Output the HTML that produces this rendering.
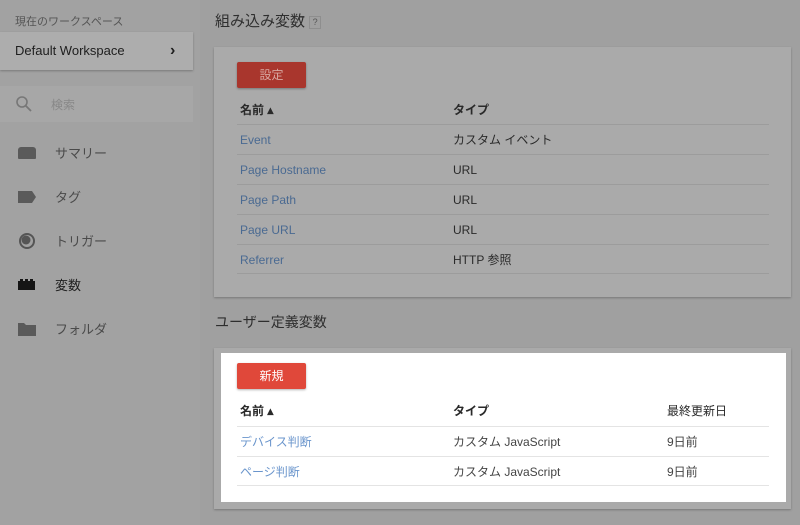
<!DOCTYPE html>
<html><head><meta charset="utf-8"><style>
*{box-sizing:border-box;margin:0;padding:0}
body{width:800px;height:525px;background:#a0a0a0;font-family:"Liberation Sans","Noto Sans CJK JP",sans-serif;position:relative;overflow:hidden;color:#2a2a2a}
.side{position:absolute;left:0;top:0;width:200px;height:525px;background:#a2a2a2}
.abs{position:absolute}
.ws{left:0;top:32px;width:193px;height:38px;background:#adadad;box-shadow:0 1px 2px rgba(0,0,0,.25);font-size:13px;line-height:38px;padding-left:15px;color:#1e1e1e}
.search{left:0;top:86px;width:193px;height:36px;background:#a7a7a7}
.nav{left:0;width:193px;font-size:13px;color:#4a4a4a}
.card{position:absolute;left:214px;width:577px;background:#aaaaaa;box-shadow:0 1px 2px rgba(0,0,0,.25)}
.btn{position:absolute;left:23px;width:69px;height:26px;border-radius:2px;font-size:12px;text-align:center;line-height:26px}
.row{position:absolute;left:23px;width:532px;height:30px;border-top:1px solid #9c9c9c;font-size:12px;line-height:30px}
.row span,.hd span{position:absolute;top:0}
.hd{position:absolute;left:23px;width:532px;height:28px;font-size:12px;font-weight:bold;line-height:28px}
.lk{color:#4a6a92}
</style></head><body>
<div class="side">
<div class="abs" style="left:15px;top:13px;font-size:11px;color:#555">現在のワークスペース</div>
<div class="abs ws">Default Workspace<span style="position:absolute;left:170px;top:0;font-size:16px;font-weight:bold">›</span></div>
<div class="abs search">
<svg class="abs" style="left:15px;top:9px" width="18" height="18" viewBox="0 0 18 18"><circle cx="7" cy="7" r="5" fill="none" stroke="#777" stroke-width="1.6"/><path d="M11 11l5 5" stroke="#777" stroke-width="1.8"/></svg>
<span class="abs" style="left:51px;top:10px;font-size:12px;color:#888">検索</span></div>
<div class="abs nav" style="top:143px"><div class="abs" style="left:18px;top:4px;width:18px;height:12px;background:#5a5a5a;border-radius:3px 3px 1px 1px"></div><span class="abs" style="left:55px;top:0">サマリー</span></div>
<div class="abs nav" style="top:187px"><svg class="abs" style="left:18px;top:4px" width="19" height="12"><path d="M0 0h14l4 6-4 6H0z" fill="#5a5a5a"/></svg><span class="abs" style="left:55px;top:0">タグ</span></div>
<div class="abs nav" style="top:231px"><svg class="abs" style="left:18px;top:1px" width="18" height="18"><circle cx="9" cy="9" r="7" fill="none" stroke="#555" stroke-width="2"/><circle cx="8" cy="8" r="4.5" fill="#555"/></svg><span class="abs" style="left:55px;top:0">トリガー</span></div>
<div class="abs nav" style="top:275px;color:#1e1e1e"><svg class="abs" style="left:18px;top:3px" width="19" height="12"><path d="M0 3h2V1h3v2h2V1h3v2h2V1h3v2h2v9H0z" fill="#151515"/></svg><span class="abs" style="left:55px;top:0">変数</span></div>
<div class="abs nav" style="top:319px"><svg class="abs" style="left:18px;top:3px" width="18" height="14"><path d="M0 1h6l2 2h10v11H0z" fill="#5a5a5a"/></svg><span class="abs" style="left:55px;top:0">フォルダ</span></div>
</div>
<div class="abs" style="left:215px;top:10px;font-size:15px;color:#2e2e2e">組み込み変数 <span style="display:inline-block;width:12px;height:13px;border:1px solid #8e8e8e;font-size:9px;line-height:11px;text-align:center;color:#555;vertical-align:middle">?</span></div>
<div class="card" style="top:47px;height:250px">
<div class="btn" style="top:15px;background:#a9362d;color:#d8a8a2;box-shadow:0 1px 2px rgba(0,0,0,.3)">設定</div>
<div class="hd" style="top:49px"><span style="left:3px">名前 ▴</span><span style="left:216px">タイプ</span></div>
<div class="row" style="top:77px"><span class="lk" style="left:3px">Event</span><span style="left:216px">カスタム イベント</span></div>
<div class="row" style="top:107px"><span class="lk" style="left:3px">Page Hostname</span><span style="left:216px">URL</span></div>
<div class="row" style="top:137px"><span class="lk" style="left:3px">Page Path</span><span style="left:216px">URL</span></div>
<div class="row" style="top:167px"><span class="lk" style="left:3px">Page URL</span><span style="left:216px">URL</span></div>
<div class="row" style="top:197px;border-bottom:1px solid #9c9c9c"><span class="lk" style="left:3px">Referrer</span><span style="left:216px">HTTP 参照</span></div>
</div>
<div class="abs" style="left:215px;top:312px;font-size:14px;color:#2e2e2e">ユーザー定義変数</div>
<div class="card" style="top:348px;height:161px">
<div class="abs" style="left:7px;top:5px;width:565px;height:149px;background:#fff">
<div class="btn" style="left:16px;top:10px;background:#e0483a;color:#fff;box-shadow:0 1px 2px rgba(0,0,0,.3)">新規</div>
<div class="hd" style="left:16px;top:44px"><span style="left:3px">名前 ▴</span><span style="left:216px">タイプ</span><span style="left:430px;font-weight:normal">最終更新日</span></div>
<div class="row" style="left:16px;top:73px;border-color:#e4e4e4"><span class="lk" style="left:3px;color:#6a95cc">デバイス判断</span><span style="left:216px;color:#444">カスタム JavaScript</span><span style="left:430px;color:#444">9日前</span></div>
<div class="row" style="left:16px;top:103px;border-color:#e4e4e4;border-bottom:1px solid #e4e4e4"><span class="lk" style="left:3px;color:#6a95cc">ページ判断</span><span style="left:216px;color:#444">カスタム JavaScript</span><span style="left:430px;color:#444">9日前</span></div>
</div></div>
</body></html>
